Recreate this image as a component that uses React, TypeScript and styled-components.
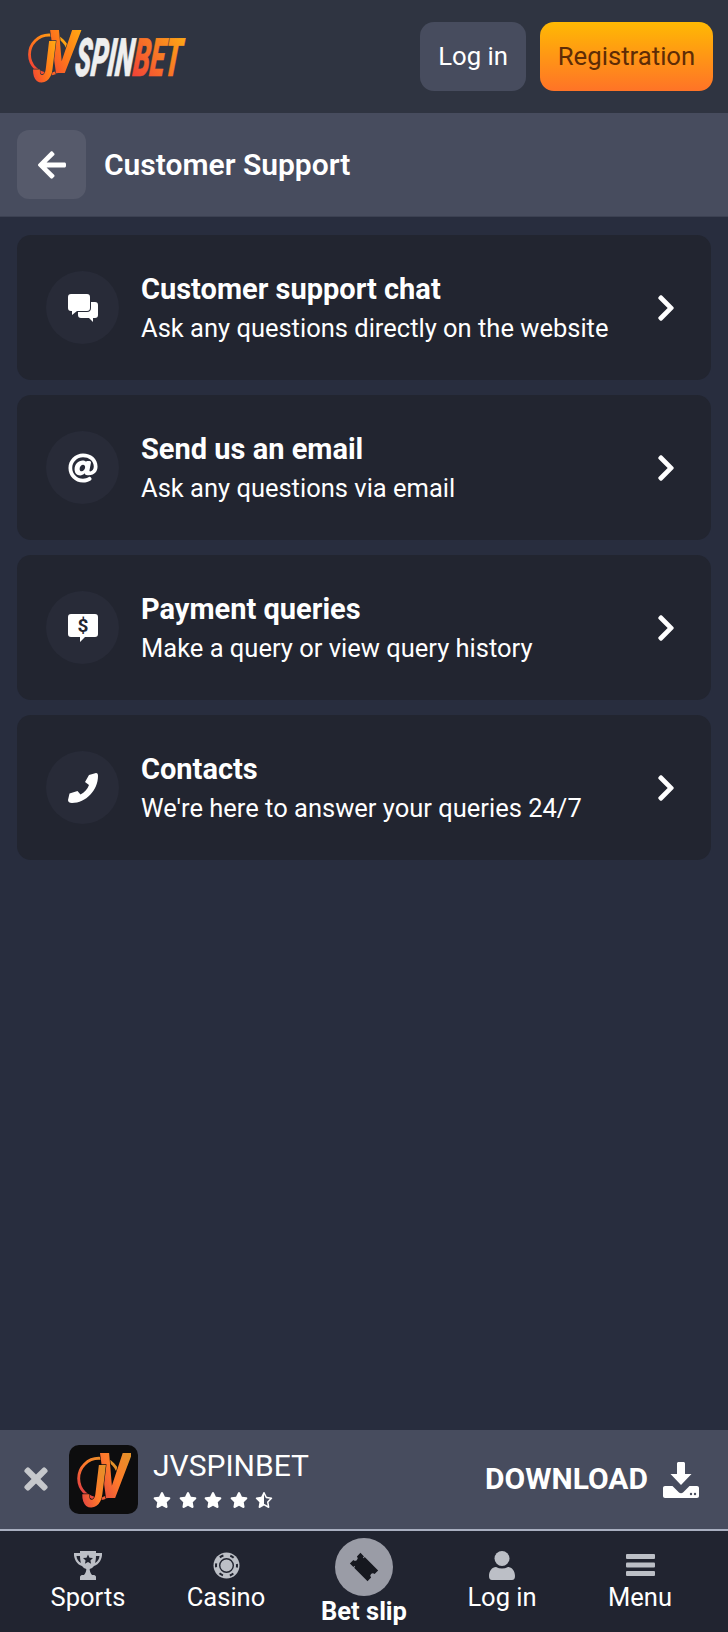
import React from "react";
import styled, { createGlobalStyle } from "styled-components";
import { FaArrowLeft, FaAt, FaChevronRight, FaStar, FaTimes } from "react-icons/fa";
import { FaRegStarHalfStroke } from "react-icons/fa6";

const GlobalStyle = createGlobalStyle`
  html, body {
    margin: 0;
    padding: 0;
    background: #282d3e;
  }
  * {
    box-sizing: border-box;
  }
`;

const Page = styled.div`
  width: 728px;
  height: 1632px;
  display: flex;
  flex-flow: column nowrap;
  background: #282d3e;
  color: #fff;
  font-family: Roboto, "Liberation Sans", sans-serif;
`;

const Header = styled.header`
  height: 113px;
  flex-shrink: 0;
  display: flex;
  align-items: center;
  justify-content: space-between;
  padding: 0 15px 0 28px;
  background: #2f3441;
`;

const Actions = styled.div`
  display: flex;
  gap: 14px;
`;

const HeaderBtn = styled.button<{ $primary?: boolean }>`
  height: 69px;
  width: ${(p) => (p.$primary ? "173px" : "106px")};
  border: 0;
  border-radius: 14px;
  padding: 0 0 2px;
  font-family: inherit;
  font-size: 25.7px;
  color: ${(p) => (p.$primary ? "#5e2c06" : "#fff")};
  background: ${(p) =>
    p.$primary ? "linear-gradient(180deg, #ffb903 0%, #ff7327 100%)" : "#474c5e"};
`;

const SubHeader = styled.div`
  height: 104px;
  flex-shrink: 0;
  display: flex;
  align-items: center;
  gap: 18px;
  padding: 0 17px;
  background: #474c5e;
  border-bottom: 1px solid #3c4152;
`;

const BackBtn = styled.button`
  width: 69px;
  height: 69px;
  border: 0;
  border-radius: 12px;
  background: #565a6b;
  color: #fff;
  display: flex;
  align-items: center;
  justify-content: center;
  font-size: 32px;
  padding: 0;
`;

const PageTitle = styled.h1`
  margin: 0;
  font-size: 30px;
  font-weight: 600;
`;

const List = styled.main`
  flex: 1;
  display: flex;
  flex-flow: column nowrap;
  gap: 15px;
  padding: 18px 17px 0;
`;

const Card = styled.a`
  height: 145px;
  display: flex;
  align-items: center;
  padding: 0 30px 0 29px;
  border-radius: 14px;
  background: #222530;
`;

const IconCircle = styled.div`
  width: 73px;
  height: 73px;
  flex-shrink: 0;
  border-radius: 50%;
  background: #282b38;
  display: flex;
  align-items: center;
  justify-content: center;
  font-size: 30px;
`;

const CardText = styled.div`
  flex: 1;
  margin-left: 22px;
  padding-top: 2px;
`;

const CardTitle = styled.div`
  font-size: 29px;
  font-weight: 700;
  line-height: 40px;
`;

const CardSub = styled.div`
  font-size: 25.5px;
  line-height: 39px;
`;

const Chevron = styled(FaChevronRight)`
  font-size: 30px;
`;

const Banner = styled.div`
  height: 101px;
  flex-shrink: 0;
  display: flex;
  align-items: center;
  padding: 0 29px 0 19px;
  background: #474c5e;
  border-bottom: 2px solid #a9afc0;
`;

const CloseIcon = styled(FaTimes)`
  font-size: 34px;
  color: #c6c8cc;
  flex-shrink: 0;
  margin-bottom: 2px;
`;

const AppIcon = styled.div`
  width: 69px;
  height: 69px;
  margin-left: 16px;
  border-radius: 10px;
  background: #0d0d0e;
  display: flex;
  align-items: center;
  justify-content: center;
`;

const AppInfo = styled.div`
  flex: 1;
  margin-left: 15px;
  padding-bottom: 3px;
`;

const AppName = styled.div`
  font-size: 30px;
  line-height: 36px;
`;

const Stars = styled.div`
  display: flex;
  gap: 7.5px;
  font-size: 18px;
  margin-top: 7px;
`;

const DownloadLabel = styled.span`
  font-size: 30px;
  font-weight: 700;
  margin-right: 15px;
  margin-bottom: 2px;
`;

const Nav = styled.nav`
  height: 101px;
  flex-shrink: 0;
  display: grid;
  grid-template-columns: repeat(5, 138px);
  padding: 0 19px;
  background: #212430;
`;

const NavItem = styled.div<{ $active?: boolean }>`
  display: flex;
  flex-flow: column nowrap;
  align-items: center;
  padding-top: ${(p) => (p.$active ? "7px" : "19px")};
  font-size: 25.5px;
  font-weight: ${(p) => (p.$active ? 700 : 400)};
  color: #fff;
  svg {
    color: #bcbfc6;
  }
`;

const NavIconBox = styled.div`
  height: 30px;
  display: flex;
  align-items: center;
  justify-content: center;
`;

const NavLabel = styled.span`
  line-height: 34px;
`;

const ActiveLabel = styled(NavLabel)`
  margin-top: -2px;
`;

const TicketCircle = styled.div`
  width: 58px;
  height: 58px;
  border-radius: 50%;
  background: #9a9ca6;
  display: flex;
  align-items: center;
  justify-content: center;
`;

const LOGO_FONT = "Roboto, sans-serif";

function JVMark({ gradient, bg }: { gradient: string; bg: string }) {
  return (
    <g>
      <circle cx="21" cy="28.500" r="19.500" fill="none" stroke={`url(#${gradient})`} strokeWidth="2.800" />
      <text
        x="19"
        y="47"
        fontFamily={LOGO_FONT}
        fontStyle="italic"
        fontWeight="900"
        fontSize="60"
        textLength="31"
        lengthAdjust="spacingAndGlyphs"
        fill={`url(#${gradient})`}
        stroke={bg}
        strokeWidth="1.500"
        paintOrder="stroke"
      >
        V
      </text>
      <text
        x="5"
        y="56"
        fontFamily={LOGO_FONT}
        fontStyle="italic"
        fontWeight="900"
        fontSize="58"
        textLength="22"
        lengthAdjust="spacingAndGlyphs"
        fill={`url(#${gradient})`}
        stroke={bg}
        strokeWidth="1.500"
        paintOrder="stroke"
      >
        J
      </text>
    </g>
  );
}

function Logo() {
  return (
    <svg width="160" height="62" viewBox="0 0 160 62" role="img" aria-label="JVSPINBET">
      <defs>
        <linearGradient id="jvGrad" x1="0" y1="1" x2="1" y2="0">
          <stop offset="0" stopColor="#f0343c" />
          <stop offset="0.5" stopColor="#ff7a1a" />
          <stop offset="1" stopColor="#ffb510" />
        </linearGradient>
        <linearGradient id="betGrad" x1="0" y1="1" x2="1" y2="0">
          <stop offset="0" stopColor="#f0343c" />
          <stop offset="1" stopColor="#ffb510" />
        </linearGradient>
      </defs>
      <JVMark gradient="jvGrad" bg="#2f3441" />
      <g transform="translate(46 50) skewX(-6)">
        <text
          fontFamily={LOGO_FONT}
          fontStyle="italic"
          fontWeight="900"
          fontSize="53"
          textLength="58"
          lengthAdjust="spacingAndGlyphs"
          fill="#eeeeee"
          stroke="#eeeeee"
          strokeWidth="0.600"
        >
          SPIN
        </text>
        <text
          x="58"
          fontFamily={LOGO_FONT}
          fontStyle="italic"
          fontWeight="900"
          fontSize="53"
          textLength="48"
          lengthAdjust="spacingAndGlyphs"
          fill="url(#betGrad)"
          stroke="url(#betGrad)"
          strokeWidth="0.600"
        >
          BET
        </text>
      </g>
    </svg>
  );
}

function AppLogo() {
  return (
    <svg width="54" height="62" viewBox="0 0 52 60" role="img" aria-label="JV">
      <defs>
        <linearGradient id="appGrad" x1="0" y1="1" x2="1" y2="0">
          <stop offset="0" stopColor="#d8304a" />
          <stop offset="0.5" stopColor="#ff7a2a" />
          <stop offset="1" stopColor="#d89a28" />
        </linearGradient>
      </defs>
      <JVMark gradient="appGrad" bg="#0d0d0e" />
    </svg>
  );
}

function ChatIcon() {
  return (
    <svg width="30" height="28" viewBox="0 0 30 28" fill="#fff">
      <path d="M13 8h14a3 3 0 0 1 3 3v10a3 3 0 0 1-3 3h-2v4l-4-4h-8a3 3 0 0 1-3-3V11a3 3 0 0 1 3-3z" />
      <path
        d="M3 0h16a3 3 0 0 1 3 3v11a3 3 0 0 1-3 3H9l-5 4v-4H3a3 3 0 0 1-3-3V3a3 3 0 0 1 3-3z"
        stroke="#282b38"
        strokeWidth="2"
        paintOrder="stroke"
      />
    </svg>
  );
}

function DollarChatIcon() {
  return (
    <svg width="30" height="28" viewBox="0 0 30 28">
      <path
        d="M3 0h24a3 3 0 0 1 3 3v17a3 3 0 0 1-3 3H17l-5 5v-5H3a3 3 0 0 1-3-3V3a3 3 0 0 1 3-3z"
        fill="#fff"
      />
      <text
        x="15"
        y="18"
        textAnchor="middle"
        fontFamily={LOGO_FONT}
        fontWeight="700"
        fontSize="19"
        fill="#222530"
      >
        $
      </text>
    </svg>
  );
}

function PhoneIcon() {
  return (
    <svg width="30" height="30" viewBox="0 0 30 30" fill="#fff">
      <path d="M21 2l7-2c1.500 0 2 1 2 3 0 14-12 27-26 27-2.500 0-4-1-4-3l1.500-6.500 8-2.500 3 3.500c4-2 7-5.500 8.500-9.500L17 9z" />
    </svg>
  );
}

function TrophyIcon() {
  return (
    <svg width="30" height="29" viewBox="0 0 30 29" fill="currentColor">
      <path d="M7 0h16v2h6c.500 6-3 11.500-8 13-1.200 1.500-2.500 2.500-4.300 3 0 2 .6 4 2.300 6h2c1 0 2 1 2 2v3H7v-3c0-1 1-2 2-2h2c1.700-2 2.300-4 2.300-6-1.800-.5-3.100-1.500-4.300-3C4 13.500.5 8 1 2h6V0zM3.500 5c.3 3 1.700 5.500 4.500 7-.6-2-1-4.500-1-7H3.500zm23 0H23c0 2.500-.4 5-1 7 2.800-1.500 4.200-4 4.500-7z" />
      <path
        d="M15 3.500l1.500 3.200 3.500.4-2.600 2.300.7 3.400-3.100-1.800-3.100 1.800.7-3.400L10 7.100l3.500-.4z"
        fill="#212430"
      />
    </svg>
  );
}

function ChipIcon() {
  return (
    <svg width="27" height="27" viewBox="0 0 27 27">
      <circle cx="13.500" cy="13.500" r="13" fill="currentColor" />
      <circle cx="13.500" cy="13.500" r="6.800" fill="none" stroke="#212430" strokeWidth="1.400" />
      <circle
        cx="13.500"
        cy="13.500"
        r="10.500"
        fill="none"
        stroke="#212430"
        strokeWidth="2"
        strokeDasharray="4 7"
        strokeDashoffset="2"
      />
    </svg>
  );
}

function TicketIcon() {
  return (
    <svg width="34" height="34" viewBox="-17 -17 34 34" fill="#16181f">
      <g transform="rotate(45)">
        <path d="M-12.500-7.500H-7.500V-6H-6.500V-7.500H12.500V-2.500A2.500 2.500 0 0 0 12.500 2.500V7.500H-6.500V6H-7.500V7.500H-12.500V2.500A2.500 2.500 0 0 0-12.500-2.500z" />
      </g>
    </svg>
  );
}

function UserIcon() {
  return (
    <svg width="26" height="29" viewBox="0 0 26 29" fill="currentColor">
      <circle cx="13" cy="7.500" r="7.500" />
      <path d="M0 25c0-5 3-9 7-9 2 1 4 1.500 6 1.500s4-.5 6-1.500c4 0 7 4 7 9 0 2.500-1 4-3 4H3c-2 0-3-1.500-3-4z" />
    </svg>
  );
}

function MenuIcon() {
  return (
    <svg width="29" height="22" viewBox="0 0 29 22" fill="currentColor">
      <rect y="0" width="29" height="5" rx="1" />
      <rect y="8.500" width="29" height="5" rx="1" />
      <rect y="17" width="29" height="5" rx="1" />
    </svg>
  );
}

function DownloadIcon() {
  return (
    <svg width="36" height="36" viewBox="0 0 36 36" fill="#fff">
      <path d="M14 1.500C14 .700 14.700 0 15.500 0h5C21.300 0 22 .700 22 1.500V12h6.500L18 23 7.500 12H14z" />
      <path d="M2 24h7.500l6.500 6.500c1.100 1.100 2.900 1.100 4 0l6.500-6.500H34c1.100 0 2 .900 2 2v8c0 1.100-.9 2-2 2H2c-1.100 0-2-.9-2-2v-8c0-1.100.9-2 2-2z" />
      <circle cx="28" cy="32" r="1.200" fill="#474c5e" />
      <circle cx="32" cy="32" r="1.200" fill="#474c5e" />
    </svg>
  );
}

const cards = [
  {
    icon: <ChatIcon />,
    title: "Customer support chat",
    sub: "Ask any questions directly on the website",
  },
  { icon: <FaAt />, title: "Send us an email", sub: "Ask any questions via email" },
  {
    icon: <DollarChatIcon />,
    title: "Payment queries",
    sub: "Make a query or view query history",
  },
  { icon: <PhoneIcon />, title: "Contacts", sub: "We're here to answer your queries 24/7" },
];

function App() {
  return (
    <Page>
      <GlobalStyle />
      <Header>
        <Logo />
        <Actions>
          <HeaderBtn>Log in</HeaderBtn>
          <HeaderBtn $primary>Registration</HeaderBtn>
        </Actions>
      </Header>
      <SubHeader>
        <BackBtn>
          <FaArrowLeft />
        </BackBtn>
        <PageTitle>Customer Support</PageTitle>
      </SubHeader>
      <List>
        {cards.map((card) => (
          <Card key={card.title}>
            <IconCircle>{card.icon}</IconCircle>
            <CardText>
              <CardTitle>{card.title}</CardTitle>
              <CardSub>{card.sub}</CardSub>
            </CardText>
            <Chevron />
          </Card>
        ))}
      </List>
      <Banner>
        <CloseIcon />
        <AppIcon>
          <AppLogo />
        </AppIcon>
        <AppInfo>
          <AppName>JVSPINBET</AppName>
          <Stars>
            <FaStar />
            <FaStar />
            <FaStar />
            <FaStar />
            <FaRegStarHalfStroke />
          </Stars>
        </AppInfo>
        <DownloadLabel>DOWNLOAD</DownloadLabel>
        <DownloadIcon />
      </Banner>
      <Nav>
        <NavItem>
          <NavIconBox>
            <TrophyIcon />
          </NavIconBox>
          <NavLabel>Sports</NavLabel>
        </NavItem>
        <NavItem>
          <NavIconBox>
            <ChipIcon />
          </NavIconBox>
          <NavLabel>Casino</NavLabel>
        </NavItem>
        <NavItem $active>
          <TicketCircle>
            <TicketIcon />
          </TicketCircle>
          <ActiveLabel>Bet slip</ActiveLabel>
        </NavItem>
        <NavItem>
          <NavIconBox>
            <UserIcon />
          </NavIconBox>
          <NavLabel>Log in</NavLabel>
        </NavItem>
        <NavItem>
          <NavIconBox>
            <MenuIcon />
          </NavIconBox>
          <NavLabel>Menu</NavLabel>
        </NavItem>
      </Nav>
    </Page>
  );
}

export default App;
